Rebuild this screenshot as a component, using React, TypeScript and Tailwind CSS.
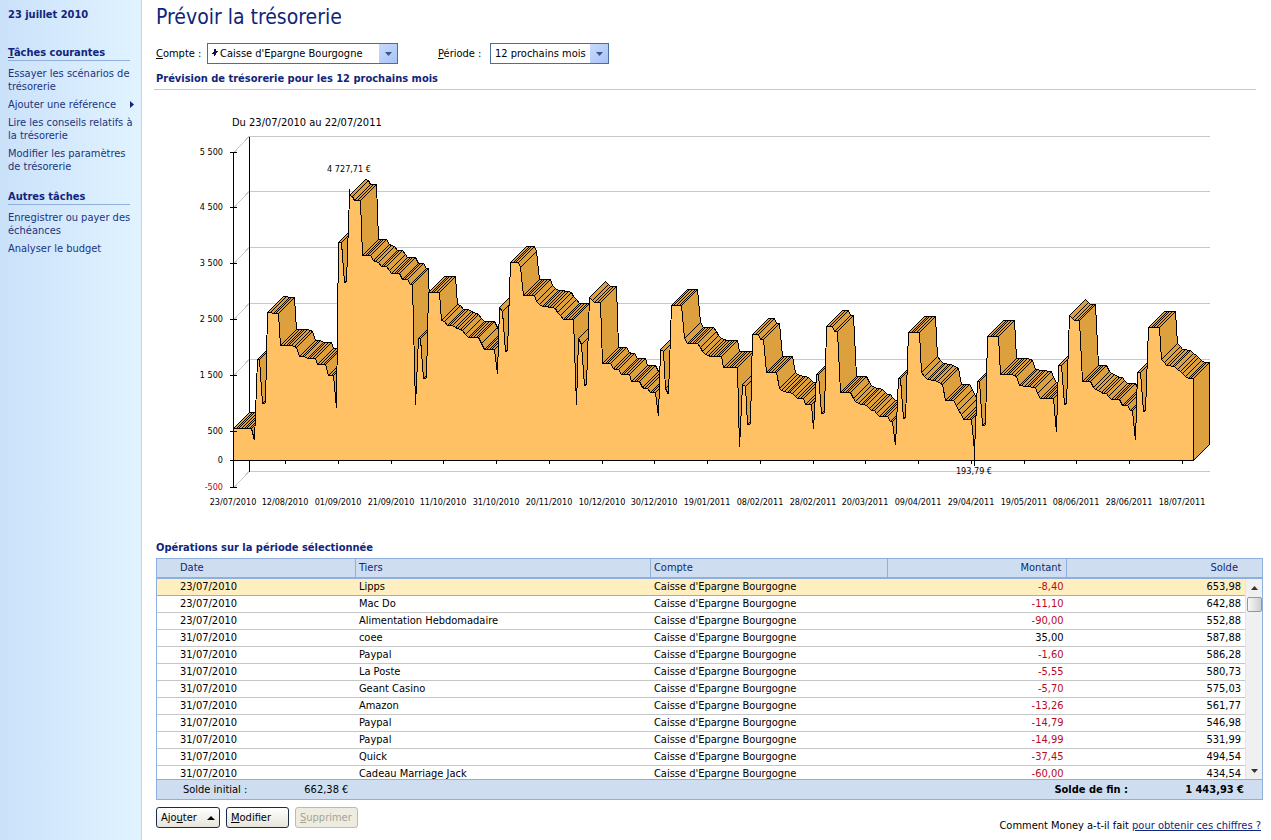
import React from "react";

type Point = [number, number];

/* Front edge of the balance curve, one entry for each change of slope. */
const CURVE: Point[] = [
  [233, 428], [251, 428], [254, 440], [257, 359], [260, 359], [263, 403], [265, 403], [267, 312], [277, 313],
  [281, 345], [292, 345], [296, 347], [299, 356], [304, 356], [307, 358], [314, 358], [318, 364], [325, 364],
  [329, 375], [333, 375], [336, 408], [338, 242], [341, 242], [344, 282], [347, 282], [349, 195], [352, 196],
  [354, 200], [360, 200], [363, 255], [370, 255], [373, 260], [378, 262], [380, 266], [387, 266], [391, 273],
  [398, 273], [402, 279], [407, 279], [410, 284], [412, 284], [415, 405], [417, 338], [420, 338], [423, 378],
  [426, 378], [428, 292], [439, 292], [442, 320], [444, 321], [447, 325], [453, 325], [455, 327], [463, 330],
  [468, 337], [478, 337], [483, 349], [494, 349], [497, 374], [499, 307], [502, 311], [505, 351], [507, 351],
  [510, 262], [518, 262], [521, 267], [523, 295], [534, 295], [537, 301], [542, 306], [547, 306], [554, 308],
  [563, 319], [573, 319], [576, 405], [578, 338], [581, 344], [584, 385], [587, 385], [589, 297], [593, 302],
  [600, 302], [603, 363], [611, 363], [614, 368], [617, 369], [620, 374], [628, 374], [632, 381], [638, 381],
  [642, 387], [646, 388], [649, 392], [655, 392], [658, 416], [660, 349], [663, 351], [666, 388], [668, 394],
  [671, 305], [681, 305], [684, 338], [687, 343], [697, 343], [701, 347], [705, 354], [709, 356], [720, 356],
  [723, 367], [737, 367], [739, 447], [742, 384], [745, 386], [747, 424], [750, 424], [752, 334], [757, 334],
  [760, 339], [763, 339], [766, 372], [776, 372], [779, 388], [784, 391], [793, 393], [798, 398], [802, 398],
  [806, 404], [811, 404], [813, 429], [816, 374], [818, 374], [821, 413], [824, 413], [826, 326], [832, 326],
  [834, 331], [837, 331], [840, 392], [850, 392], [853, 398], [858, 403], [866, 405], [871, 410], [875, 410],
  [879, 416], [887, 416], [890, 421], [892, 421], [895, 445], [897, 378], [900, 378], [903, 418], [905, 418],
  [908, 332], [919, 332], [921, 372], [927, 379], [934, 380], [942, 384], [946, 400], [953, 400], [955, 405],
  [964, 419], [971, 419], [974, 450], [976, 381], [979, 381], [982, 425], [984, 425], [987, 336], [998, 336],
  [1000, 374], [1012, 374], [1015, 376], [1019, 385], [1034, 387], [1040, 398], [1053, 398], [1055, 432],
  [1058, 365], [1061, 365], [1064, 404], [1066, 404], [1069, 315], [1074, 320], [1080, 320], [1083, 381],
  [1090, 381], [1093, 387], [1101, 392], [1106, 393], [1112, 399], [1118, 399], [1122, 405], [1127, 405],
  [1129, 410], [1132, 410], [1134, 440], [1137, 372], [1140, 372], [1143, 411], [1145, 411], [1148, 327],
  [1159, 327], [1161, 359], [1167, 365], [1174, 366], [1180, 371], [1188, 378], [1193, 378],
];

const BASE = 460;
const DEPTH = 16;
const START = 233;
const DAY = 2.637;

/* One point per day, with every steep drop or rise taking exactly one day. */
function daily(points: Point[]): Point[] {
  const knots: Point[] = [[0, points[0][1]]];
  for (let i = 1; i < points.length; i++) {
    const last = knots[knots.length - 1];
    const day = Math.round((points[i][0] - START) / DAY);
    if (day > last[0]) knots.push([day, points[i][1]]);
    else if (Math.abs(points[i][1] - last[1]) > 12) knots.push([last[0] + 1, points[i][1]]);
    else last[1] = points[i][1];
  }
  const out: Point[] = [[START, knots[0][1]]];
  for (let i = 1; i < knots.length; i++) {
    const [d0, y0] = knots[i - 1];
    const [d1, y1] = knots[i];
    for (let d = d0 + 1; d <= d1; d++) {
      out.push([Math.round(START + d * DAY), Math.round(y0 + ((y1 - y0) * (d - d0)) / (d1 - d0))]);
    }
  }
  return out;
}

const DAYS = daily(CURVE);

const Y_TICKS: [string, number][] = [
  ["5 500", 152], ["4 500", 207], ["3 500", 263], ["2 500", 319], ["1 500", 375], ["500", 431], ["0", 460], ["-500", 487],
];

const X_TICKS: [string, number][] = [
  ["23/07/2010", 233], ["12/08/2010", 285], ["01/09/2010", 338], ["21/09/2010", 391], ["11/10/2010", 443],
  ["31/10/2010", 496], ["20/11/2010", 549], ["10/12/2010", 602], ["30/12/2010", 654], ["19/01/2011", 707],
  ["08/02/2011", 760], ["28/02/2011", 813], ["20/03/2011", 865], ["09/04/2011", 918], ["29/04/2011", 971],
  ["19/05/2011", 1024], ["08/06/2011", 1076], ["28/06/2011", 1129], ["18/07/2011", 1182],
];

function Chart() {
  return (
    <svg
      viewBox="142 91 1129 447"
      className="block h-auto w-full"
      role="img"
      aria-label="Prévision de trésorerie"
      fill="#000"
    >
      <g shapeRendering="crispEdges" strokeWidth="1">
        <g stroke="#c8c8c8">
          {[136, 191, 247, 303, 359, 471].map((y) => (
            <path key={y} d={`M249 ${y}.5H1210M234 ${y + 16}.5l15 -16`} fill="none" />
          ))}
        </g>
        <path d="M249.5 137V472" stroke="#000" />
        {DAYS.slice(1).map(([x1, y1], i) => {
          const [x0, y0] = DAYS[i];
          return (
            <g key={i}>
              <polygon
                points={`${x0},${y0} ${x0 + DEPTH},${y0 - DEPTH} ${x1 + DEPTH},${y1 - DEPTH} ${x1},${y1}`}
                transform="translate(0.5 0.5)"
                fill="#dda03f"
                stroke="#000"
              />
              <polygon points={`${x0},${y0} ${x1},${y1} ${x1},${BASE} ${x0},${BASE}`} transform="translate(0.5 0.5)" fill="#ffc163" />
              <path d={`M${x0} ${y0}L${x1} ${y1}`} transform="translate(0.5 0.5)" stroke="#000" />
            </g>
          );
        })}
        <path d="M1193.5 460.5V378.5L1209.5 362.5V444.5Z" fill="#dda03f" stroke="#000" />
        <path d="M233 460.5H1194M233.5 152V488M349.5 189V196M974.5 440V466" stroke="#000" />
        <path d={Y_TICKS.map(([, y]) => `M230 ${y}.5H237`).join("")} stroke="#000" />
        <path d={X_TICKS.map(([, x]) => `M${x}.5 460V464`).join("")} stroke="#000" />
      </g>
      <text x="232" y="126" className="text-[11px]">Du 23/07/2010 au 22/07/2011</text>
      <g className="text-[9px]">
        {Y_TICKS.map(([label, y]) => (
          <text key={label} x="223" y={y + 3} textAnchor="end" fill={label.startsWith("-") ? "#c00018" : "#000"}>
            {label}
          </text>
        ))}
        {X_TICKS.map(([label, x]) => (
          <text key={label} x={x} y="505" textAnchor="middle">{label}</text>
        ))}
        <text x="349" y="172" textAnchor="middle">4 727,71 €</text>
        <text x="974" y="474" textAnchor="middle">193,79 €</text>
      </g>
    </svg>
  );
}

const ROWS: [string, string, string, string][] = [
  ["23/07/2010", "Lipps", "-8,40", "653,98"],
  ["23/07/2010", "Mac Do", "-11,10", "642,88"],
  ["23/07/2010", "Alimentation Hebdomadaire", "-90,00", "552,88"],
  ["31/07/2010", "coee", "35,00", "587,88"],
  ["31/07/2010", "Paypal", "-1,60", "586,28"],
  ["31/07/2010", "La Poste", "-5,55", "580,73"],
  ["31/07/2010", "Geant Casino", "-5,70", "575,03"],
  ["31/07/2010", "Amazon", "-13,26", "561,77"],
  ["31/07/2010", "Paypal", "-14,79", "546,98"],
  ["31/07/2010", "Paypal", "-14,99", "531,99"],
  ["31/07/2010", "Quick", "-37,45", "494,54"],
  ["31/07/2010", "Cadeau Marriage Jack", "-60,00", "434,54"],
];

function Operations() {
  return (
    <div className="border border-[#8fb0dd]">
      <div className="relative h-[220px] overflow-hidden">
        <table className="w-full table-fixed border-separate border-spacing-0 leading-4">
          <colgroup>
            <col className="w-[18%]" />
            <col className="w-[26.7%]" />
            <col className="w-[21.5%]" />
            <col className="w-[16.2%]" />
            <col />
          </colgroup>
          <thead>
            <tr className="h-5 bg-[#cedef0] text-left text-[#10296b] [&>th]:border-b-2 [&>th]:border-[#8fb0dd] [&>th]:p-0 [&>th]:font-normal">
              <th className="border-r"><span className="pl-[23px]">Date</span></th>
              <th className="border-r"><span className="pl-[3px]">Tiers</span></th>
              <th className="border-r"><span className="pl-[3px]">Compte</span></th>
              <th className="border-r text-right"><span className="pr-[5px]">Montant</span></th>
              <th className="text-right"><span className="pr-6">Solde</span></th>
            </tr>
          </thead>
          <tbody>
            {ROWS.map(([date, payee, amount, balance], i) => (
              <tr
                key={i}
                className={
                  i === 0
                    ? "h-[17px] bg-[#ffefc0] [&>td]:border-b [&>td]:border-[#8fb0dd] [&>td]:p-0"
                    : "h-[17px] [&>td]:border-b [&>td]:border-[#c6c6c6] [&>td]:p-0"
                }
              >
                <td><span className="pl-[23px]">{date}</span></td>
                <td><span className="pl-[3px]">{payee}</span></td>
                <td><span className="pl-[3px]">Caisse d'Epargne Bourgogne</span></td>
                <td className={amount.startsWith("-") ? "text-right text-[#b80a1e]" : "text-right"}>
                  <span className="pr-1">{amount}</span>
                </td>
                <td className="text-right"><span className="pr-[21px]">{balance}</span></td>
              </tr>
            ))}
          </tbody>
        </table>
        <div className="absolute top-5 right-0 bottom-0 flex w-[17px] flex-col items-center border-l border-[#dfe6ef] bg-[#f0f0f0]">
          <button aria-label="Défiler vers le haut" className="flex h-[18px] w-full items-center justify-center">
            <svg viewBox="0 0 7 4" className="h-1 w-[7px]" fill="#333"><path d="M3.5 0L7 4H0Z" /></svg>
          </button>
          <div className="h-[15px] w-[15px] rounded-[2px] border border-[#979797] bg-linear-to-r from-[#f7f7f7] to-[#cfcfd3]" />
          <button aria-label="Défiler vers le bas" className="mt-auto flex h-[17px] w-full items-center justify-center">
            <svg viewBox="0 0 7 4" className="h-1 w-[7px]" fill="#333"><path d="M0 0H7L3.5 4Z" /></svg>
          </button>
        </div>
      </div>
      <div className="flex h-5 items-center border-t border-[#8fb0dd] bg-[#cedef0] pr-[18px] pl-[26px]">
        <span>Solde initial :</span>
        <span className="ml-[57px]">662,38 €</span>
        <span className="ml-auto font-bold">Solde de fin :</span>
        <span className="w-[116px] text-right font-bold">1 443,93 €</span>
      </div>
    </div>
  );
}

function Arrow() {
  return (
    <span className="pointer-events-none absolute top-px right-px bottom-px flex w-[18px] items-center justify-center bg-linear-to-br from-[#c9dafb] to-[#a9c3f5]">
      <svg viewBox="0 0 7 4" className="h-1 w-[7px]" fill="#35588f"><path d="M0 0H7L3.5 4Z" /></svg>
    </span>
  );
}

function SideHeading({ children }: { children: React.ReactNode }) {
  return <h2 className="mb-1.5 border-b border-[#8eb0dc] pb-px font-bold text-[#10257a]">{children}</h2>;
}

export default function App() {
  return (
    <div className="flex min-h-screen bg-white font-['DejaVu_Sans_Condensed','DejaVu_Sans',sans-serif] text-[11px] leading-[13px] text-black">
      <aside className="w-[142px] shrink-0 border-r border-[#bfd6ee] bg-linear-to-r from-[#cae1fa] to-[#e1f3ff] pt-2 pr-[11px] pl-2 text-[#1b347e]">
        <p className="mb-[25px] font-bold text-[#10257a]">23 juillet 2010</p>
        <SideHeading><u>T</u>âches courantes</SideHeading>
        <ul className="mb-[17px] flex flex-col gap-[5px] whitespace-nowrap">
          <li><a href="#scenarios">Essayer les scénarios de<br />trésorerie</a></li>
          <li>
            <a href="#reference" className="-mr-1 flex items-center justify-between">
              Ajouter une référence
              <svg viewBox="0 0 4 7" className="h-[7px] w-1" fill="#10257a"><path d="M0 0L4 3.5L0 7Z" /></svg>
            </a>
          </li>
          <li><a href="#conseils">Lire les conseils relatifs à<br />la trésorerie</a></li>
          <li><a href="#parametres">Modifier les paramètres<br />de trésorerie</a></li>
        </ul>
        <SideHeading>Autres tâches</SideHeading>
        <ul className="flex flex-col gap-[5px] whitespace-nowrap">
          <li><a href="#echeances">Enregistrer ou payer des<br />échéances</a></li>
          <li><a href="#budget">Analyser le budget</a></li>
        </ul>
      </aside>

      <main className="min-w-0 flex-1">
        <h1 className="pt-1 pl-3.5 text-[21px] leading-[26px] text-[#10257a]">Prévoir la trésorerie</h1>
        <div className="mt-[13px] flex items-center pl-3.5">
          <label htmlFor="compte" className="w-[51px]"><u>C</u>ompte :</label>
          <div className="relative h-[21px] w-[191px]">
            <select id="compte" className="h-full w-full appearance-none border border-[#4a6f9f] bg-white pr-5 pl-3">
              <option>Caisse d'Epargne Bourgogne</option>
            </select>
            <svg viewBox="0 0 6 7" className="pointer-events-none absolute top-1.5 left-[5px] h-[7px] w-1.5" fill="#10105a" shapeRendering="crispEdges">
              <path d="M2 0H4V2H6V3H5V4H4V6H3V7H2V5H0V4H1V3H2Z" />
            </svg>
            <Arrow />
          </div>
          <label htmlFor="periode" className="ml-10 w-[52px]"><u>P</u>ériode :</label>
          <div className="relative h-[21px] w-[119px]">
            <select id="periode" className="h-full w-full appearance-none border border-[#4a6f9f] bg-white pr-5 pl-1">
              <option>12 prochains mois</option>
            </select>
            <Arrow />
          </div>
        </div>
        <h2 className="mt-2 mr-[15px] ml-3 border-b border-[#c9c9c9] pb-1 pl-0.5 font-bold text-[#10257a]">
          Prévision de trésorerie pour les 12 prochains mois
        </h2>
        <div className="pt-px">
          <Chart />
        </div>
        <section className="pr-2 pl-3.5">
          <h2 className="mt-[3px] mb-1 font-bold text-[#10257a]">Opérations sur la période sélectionnée</h2>
          <Operations />
          <div className="mt-[7px] flex gap-1.5">
            <button className="flex h-[21px] w-16 items-center justify-between rounded-[3px] border border-[#1b2a4f] bg-linear-to-b from-white to-[#e6e4da] px-1">
              <span>Ajo<u>u</u>ter</span>
              <svg viewBox="0 0 8 4" className="h-1 w-2"><path d="M4 0L8 4H0Z" /></svg>
            </button>
            <button className="h-[21px] w-[63px] rounded-[3px] border border-[#1b2a4f] bg-linear-to-b from-white to-[#e6e4da] px-1 text-left">
              <u>M</u>odifier
            </button>
            <button disabled className="h-[21px] w-[63px] rounded-[3px] border border-[#bdbbae] bg-[#eeece0] px-1 text-left text-[#a5a393]">
              <u>S</u>upprimer
            </button>
            <p className="mt-3 ml-auto pr-0.5">
              Comment Money a-t-il fait <a href="#aide" className="text-[#10257a] underline">pour obtenir ces chiffres ?</a>
            </p>
          </div>
        </section>
      </main>
    </div>
  );
}
